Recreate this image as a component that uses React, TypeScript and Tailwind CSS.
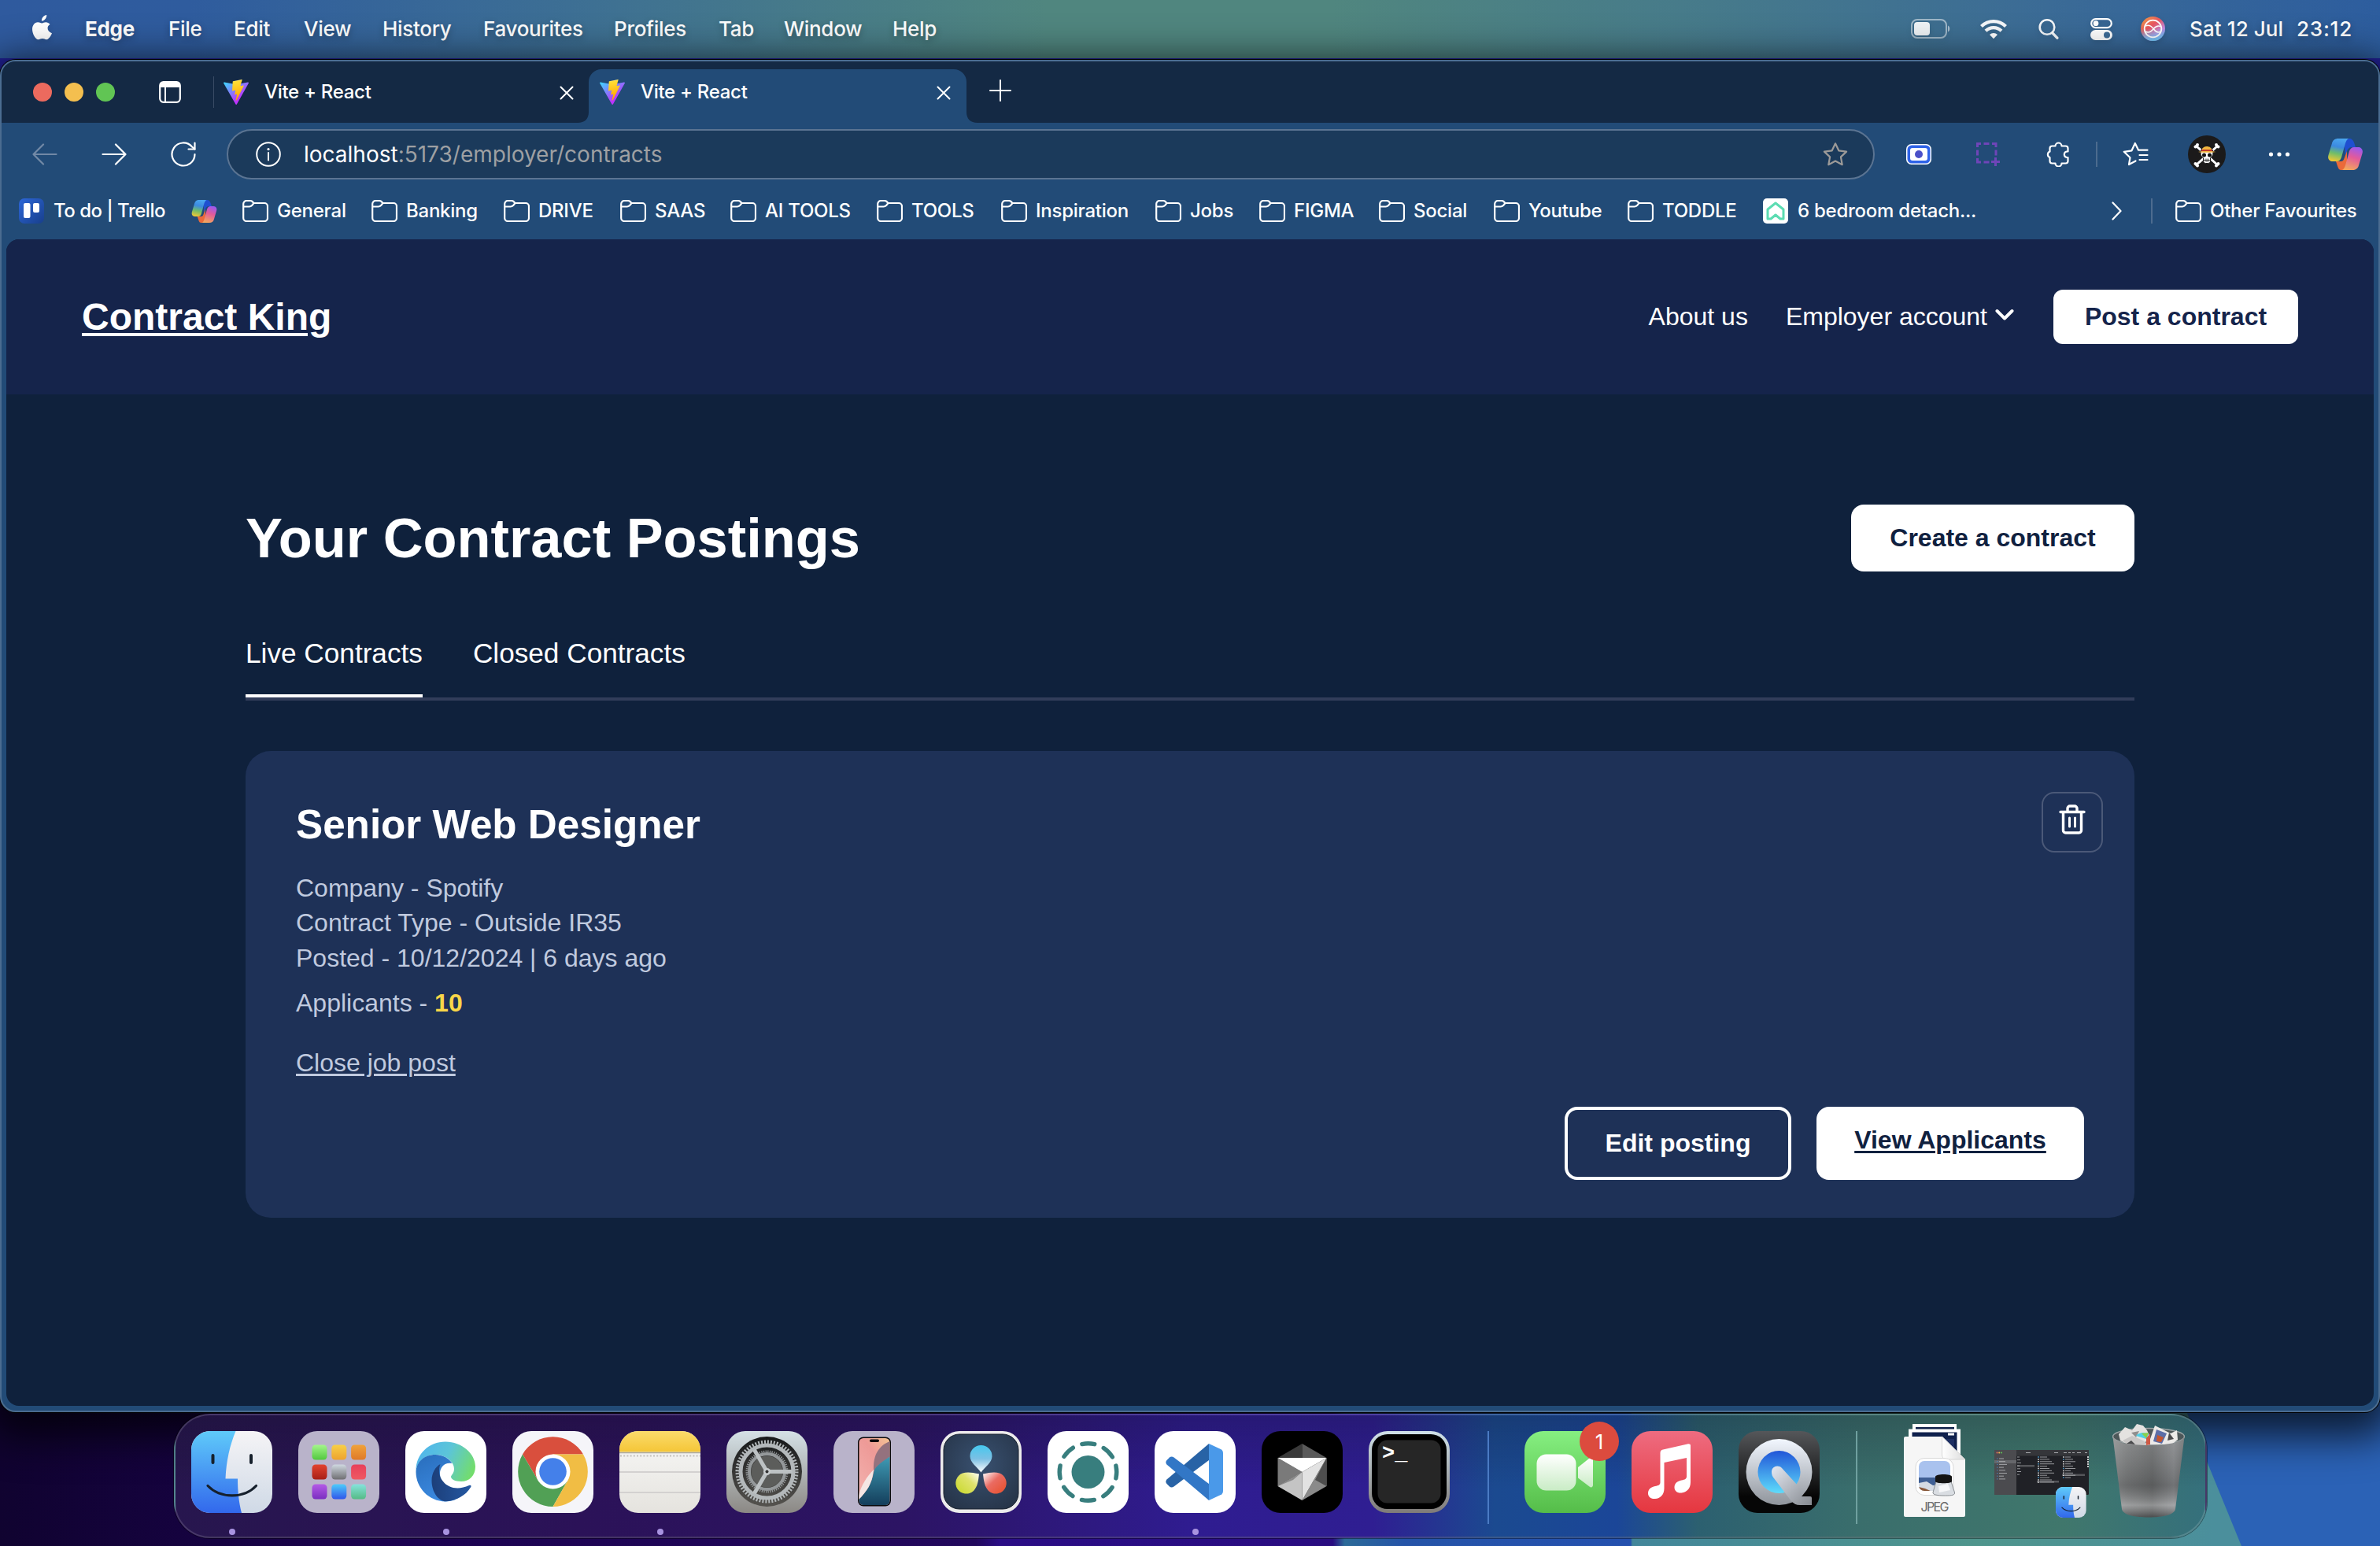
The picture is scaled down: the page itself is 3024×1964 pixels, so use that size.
import React from 'react';

type IconProps = { className?: string };

/* ---------- Browser and system icons ---------- */

const AppleLogo = () => (
  <svg className="h-[32px] w-[26px] drop-shadow-md" viewBox="0 0 26 32" fill="white">
    <path d="M18.2 0c.2 2-.6 3.900-1.800 5.300C15.200 6.700 13.400 7.700 11.900 7.600c-.2-1.900.7-3.900 1.800-5.100C14.900 1.100 16.800.1 18.200 0z" />
    <path d="M25 23.300c-.7 1.600-1 2.300-1.900 3.700-1.300 1.900-3 4.300-5.200 4.300-1.900 0-2.400-1.200-5-1.200s-3.200 1.200-5.100 1.200c-2.200 0-3.800-2.200-5.100-4.100C-.4 22-.9 15.800 1.600 12.500c1.300-2 3.500-3.200 5.500-3.200 2.100 0 3.400 1.200 5.100 1.200 1.700 0 2.700-1.200 5.100-1.200 1.800 0 3.800 1 5.200 2.700-4.600 2.500-3.800 9 2.500 11.300z" />
  </svg>
);

const Battery = () => (
  <svg className="h-[26px] w-[50px] drop-shadow-md" viewBox="0 0 50 26" fill="none">
    <rect x="1" y="1" width="44" height="23" rx="7" stroke="white" strokeOpacity=".5" strokeWidth="2" />
    <rect x="4" y="4" width="20" height="17" rx="4" fill="white" fillOpacity=".92" />
    <path d="M47 8.500c3 1.200 3 6.800 0 8z" fill="white" fillOpacity=".55" />
  </svg>
);

const Wifi = () => (
  <svg className="h-[26px] w-[34px] drop-shadow-md" viewBox="0 0 34 26" fill="none" stroke="white" strokeOpacity=".95" strokeWidth="4.200">
    <path d="M1.500 9.600a22 22 0 0 1 31 0" />
    <path d="M7 15.300a14.200 14.200 0 0 1 20 0" />
    <path d="M17 25.300l-5-5.200a7.200 7.200 0 0 1 10 0z" fill="white" stroke="none" />
  </svg>
);

const SearchIcon = () => (
  <svg className="h-[28px] w-[26px] drop-shadow-md" viewBox="0 0 26 28" fill="none" stroke="white" strokeOpacity=".95" strokeLinecap="round">
    <circle cx="11" cy="11.500" r="9.300" strokeWidth="2.600" />
    <path d="M17.800 18.800l6 6.400" strokeWidth="3.400" />
  </svg>
);

const ControlCentre = () => (
  <svg className="h-[28px] w-[28px] drop-shadow-md" viewBox="0 0 28 28" fill="none">
    <rect x="1.200" y="1.200" width="25.600" height="11" rx="5.500" stroke="white" strokeWidth="2.200" />
    <circle cx="7" cy="6.700" r="3.400" fill="white" />
    <rect x="0" y="15" width="28" height="13" rx="6.500" fill="white" />
    <circle cx="21" cy="21.500" r="4" fill="#3d6c97" />
  </svg>
);

const Siri = () => (
  <svg className="h-[31px] w-[31px] drop-shadow-md" viewBox="0 0 31 31">
    <defs>
      <linearGradient id="siri" x1=".1" y1="0" x2=".9" y2="1">
        <stop offset="0" stopColor="#f0a045" />
        <stop offset=".4" stopColor="#ea5560" />
        <stop offset=".7" stopColor="#c68be0" />
        <stop offset="1" stopColor="#5aa8f0" />
      </linearGradient>
      <linearGradient id="siri2" x1="0" y1="0" x2="0" y2="1">
        <stop offset=".5" stopColor="#70c8f5" stopOpacity="0" />
        <stop offset="1" stopColor="#70c8f5" />
      </linearGradient>
    </defs>
    <circle cx="15.500" cy="15.500" r="15.500" fill="url(#siri)" />
    <circle cx="15.500" cy="15.500" r="15.500" fill="url(#siri2)" />
    <circle cx="15.500" cy="15.500" r="10.800" fill="none" stroke="white" strokeWidth="1.800" />
    <path d="M6 12c5-2.500 8 .5 10.500 4s5 5.500 9 3M5.500 19c4 2 8 0 10.500-3s5-5 9-3.500" fill="none" stroke="white" strokeWidth="1.500" />
  </svg>
);

const SidebarIcon = () => (
  <svg className="h-[28px] w-[28px]" viewBox="0 0 28 28" fill="none">
    <rect x="1.200" y="1.200" width="25.600" height="25.600" rx="4.500" stroke="white" strokeWidth="2.200" />
    <path d="M1 8V5a4 4 0 0 1 4-4h18a4 4 0 0 1 4 4v3z" fill="white" />
    <path d="M8 8v19" stroke="white" strokeWidth="2" />
  </svg>
);

const ViteLogo = () => (
  <svg className="h-[32px] w-[32px]" viewBox="0 0 256 257">
    <defs>
      <linearGradient id="viteA" x1="-.8%" x2="57.600%" y1="7.600%" y2="78.400%">
        <stop offset="0" stopColor="#41D1FF" />
        <stop offset="1" stopColor="#BD34FE" />
      </linearGradient>
      <linearGradient id="viteB" x1="43.400%" x2="50.300%" y1="2.200%" y2="89%">
        <stop offset="0" stopColor="#FFEA83" />
        <stop offset=".083" stopColor="#FFDD35" />
        <stop offset="1" stopColor="#FFA800" />
      </linearGradient>
    </defs>
    <path fill="url(#viteA)" d="M255.153 37.938L134.897 252.976c-2.483 4.440-8.862 4.466-11.382.048L.875 37.958c-2.746-4.814 1.371-10.646 6.827-9.670l120.385 21.517a6.537 6.537 0 0 0 2.322-.004l117.867-21.483c5.438-.991 9.574 4.796 6.877 9.620z" />
    <path fill="url(#viteB)" d="M185.432.063L96.440 17.501a3.268 3.268 0 0 0-2.634 3.014l-5.474 92.456a3.268 3.268 0 0 0 3.997 3.378l24.777-5.718c2.318-.535 4.413 1.507 3.936 3.838l-7.361 36.047c-.495 2.426 1.782 4.500 4.151 3.780l15.304-4.649c2.372-.720 4.652 1.360 4.150 3.788l-11.698 56.621c-.732 3.542 3.979 5.473 5.943 2.437l1.313-2.028l72.516-144.720c1.215-2.423-.880-5.186-3.540-4.672l-25.505 4.922c-2.396.462-4.435-1.770-3.759-4.114l16.646-57.705c.677-2.350-1.370-4.583-3.769-4.113z" />
  </svg>
);

const Cross = () => (
  <svg className="h-[18px] w-[18px]" viewBox="0 0 18 18" stroke="white" strokeWidth="2" strokeLinecap="round">
    <path d="M1.500 1.500l15 15M16.500 1.500l-15 15" />
  </svg>
);

const Plus = () => (
  <svg className="h-[28px] w-[28px]" viewBox="0 0 28 28" stroke="white" strokeWidth="2" strokeLinecap="round">
    <path d="M14 1v26M1 14h26" />
  </svg>
);

const ArrowIcon = ({ className }: IconProps) => (
  <svg className={className} viewBox="0 0 32 28" fill="none" stroke="currentColor" strokeWidth="2.200" strokeLinecap="round" strokeLinejoin="round">
    <path d="M1.500 14h29M18 1.500L30.500 14 18 26.500" />
  </svg>
);

const Reload = () => (
  <svg className="h-[32px] w-[32px]" viewBox="0 0 32 32" fill="none" stroke="white" strokeWidth="2.200" strokeLinecap="round" strokeLinejoin="round">
    <path d="M30.500 16A14.500 14.500 0 1 1 27 6.500L30.500 9.500" />
    <path d="M30.500 1.500v8h-8" />
  </svg>
);

const InfoIcon = () => (
  <svg className="h-[32px] w-[32px]" viewBox="0 0 32 32" fill="none" stroke="white" strokeWidth="2">
    <circle cx="16" cy="16" r="14.800" />
    <path d="M16 14v9.500" strokeLinecap="round" />
    <circle cx="16" cy="9.500" r="1.600" fill="white" stroke="none" />
  </svg>
);

const STAR = 'M16 1.800l4.300 9 9.800 1.300-7.200 6.800 1.800 9.800L16 24l-8.700 4.700 1.800-9.800L1.900 12.100l9.800-1.300z';

const Star = () => (
  <svg className="h-[32px] w-[32px]" viewBox="0 0 32 31" fill="none" stroke="#9c9a98" strokeWidth="2.200" strokeLinejoin="round">
    <path d={STAR} />
  </svg>
);

const RecorderIcon = () => (
  <svg className="h-[26px] w-[32px]" viewBox="0 0 32 26">
    <rect width="32" height="26" rx="6.500" fill="#fff" />
    <rect x="1.500" y="1.500" width="29" height="23" rx="5.500" fill="#2f63e8" />
    <rect x="5" y="5" width="22" height="16" rx="3" fill="#fff" />
    <circle cx="16" cy="13" r="5" fill="#4b50c8" />
  </svg>
);

const CaptureIcon = () => (
  <svg className="h-[30px] w-[30px]" viewBox="0 0 30 30" fill="none" stroke="#6f45b8" strokeWidth="3">
    <path d="M1.500 6V1.500H6M20 1.500h5V6M1.500 20v5H6M9.500 1.500h7M1.500 9.500v7M25 9.500v7M9.500 25h7M24.500 19v11M19 24.500h11" />
  </svg>
);

const Puzzle = () => (
  <svg className="h-[32px] w-[30px]" viewBox="0 0 30 32" fill="none" stroke="white" strokeWidth="2.200" strokeLinejoin="round">
    <path d="M12.500 5.500a4 4 0 0 1 8 0h5a3 3 0 0 1 3 3v4h-1.500a3.800 3.800 0 0 0 0 7.500h1.500v4.500a3 3 0 0 1-3 3h-5a4 4 0 0 1-8 0h-4a3 3 0 0 1-3-3V20a4 4 0 0 1 0-7.500v-4a3 3 0 0 1 3-3z" />
  </svg>
);

const StarList = () => (
  <svg className="h-[32px] w-[33px]" viewBox="0 0 33 32" fill="none" stroke="white" strokeWidth="2.200" strokeLinejoin="round" strokeLinecap="round">
    <path d="M16.500 24.500L8 29l1.500-8.800-7.800-7.400 9.800-1.500L15.800 2l4.300 8.700h11.400M21.500 17h10M21.500 23h10" />
  </svg>
);

const Avatar = () => (
  <svg className="h-[48px] w-[48px]" viewBox="0 0 48 48">
    <circle cx="24" cy="24" r="24" fill="#1b1a1a" />
    <g stroke="#fff" strokeWidth="3" strokeLinecap="round">
      <path d="M10.500 13.500l27 24M37.500 13.500l-27 24" />
    </g>
    <g fill="#fff">
      <circle cx="9.500" cy="14.500" r="2" /><circle cx="12" cy="12" r="2" />
      <circle cx="38.500" cy="14.500" r="2" /><circle cx="36" cy="12" r="2" />
      <circle cx="9.500" cy="36" r="2" /><circle cx="12" cy="38.500" r="2" />
      <circle cx="38.500" cy="36" r="2" /><circle cx="36" cy="38.500" r="2" />
      <path d="M16 22a8 8 0 0 1 16 0c0 4-2 5.500-3.500 6.500V33a3 3 0 0 1-3 2.500h-3A3 3 0 0 1 19.500 33v-4.500C18 27.500 16 26 16 22z" stroke="#1b1a1a" />
    </g>
    <circle cx="20.500" cy="25" r="2.500" fill="#111" /><circle cx="27.500" cy="25" r="2.500" fill="#111" />
    <path d="M20 31.500h8M22 29.500v4M24 29.500v4.500M26 29.500v4" stroke="#222" strokeWidth=".8" />
    <path d="M17.500 20c0-8 13-8 13 0z" fill="#f3b73e" />
    <path d="M17 18h14v2.500H17z" fill="#c0392b" />
    <path d="M13 21c4-1.300 18-1.300 22 0-3 1-19 1-22 0z" fill="#f3b73e" />
  </svg>
);

const Copilot = ({ className }: IconProps) => (
  <svg className={className} viewBox="0 0 44 40">
    <defs>
      <linearGradient id="copA" x1=".5" y1="0" x2=".3" y2="1">
        <stop offset="0" stopColor="#4aa5ee" />
        <stop offset=".35" stopColor="#3c8ae0" />
        <stop offset=".65" stopColor="#6fbd6a" />
        <stop offset="1" stopColor="#f1c833" />
      </linearGradient>
      <linearGradient id="copB" x1=".7" y1="0" x2=".4" y2="1">
        <stop offset="0" stopColor="#9a5af0" />
        <stop offset=".45" stopColor="#e35a9a" />
        <stop offset="1" stopColor="#f2a55e" />
      </linearGradient>
    </defs>
    <path d="M20 0h7c3 0 5 2 6 5l2 6h-5c-3 0-5 2-6 5l-2 6z" fill="#1f4fd0" />
    <path d="M24 40h-7c-3 0-4-2-5-5l-2-6h6c3 0 4-2 5-5l3-8z" fill="#ea6a3a" />
    <path d="M13 0h13c-2 1-3 3-4 6l-5 18c-1 3-3 5-6 5H6c-4 0-7-3-5.500-8L5 6c1-4 4-6 8-6z" fill="url(#copA)" />
    <path d="M31 40H18c2-1 3-3 4-6l5-18c1-3 3-5 6-5h5c4 0 7 3 5.500 8L39 34c-1 4-4 6-8 6z" fill="url(#copB)" />
  </svg>
);

const Folder = () => (
  <svg className="h-[28px] w-[33px] shrink-0" viewBox="0 0 33 28" fill="none" stroke="white" strokeWidth="2.200" strokeLinejoin="round">
    <path d="M1.200 8V5a4 4 0 0 1 4-4h4.500c1.500 0 2.500.6 3.300 1.400L14.500 4H28a4 4 0 0 1 4 4v15a4 4 0 0 1-4 4H5.200a4 4 0 0 1-4-4z" />
    <path d="M1.200 8.500h7.500c1.500 0 2.500-.5 3.300-1.400L14.500 4" />
  </svg>
);

const TrelloIcon = () => (
  <svg className="h-[32px] w-[32px] shrink-0" viewBox="0 0 32 32">
    <defs>
      <linearGradient id="trello" x1="0" y1="0" x2="1" y2="1">
        <stop offset="0" stopColor="#2d67d8" />
        <stop offset="1" stopColor="#183f8c" />
      </linearGradient>
    </defs>
    <rect width="32" height="32" rx="7" fill="url(#trello)" />
    <rect x="6" y="6" width="8.500" height="19" rx="2" fill="#fff" />
    <rect x="18" y="6" width="8" height="12" rx="2" fill="#fff" />
  </svg>
);

const HouseIcon = () => (
  <svg className="h-[32px] w-[32px] shrink-0" viewBox="0 0 32 32">
    <rect width="32" height="32" rx="5" fill="#fff" />
    <path d="M16 6L6 14v12h4l6-5 6 5h4V14z" fill="none" stroke="#5cdcb2" strokeWidth="3" strokeLinejoin="round" />
  </svg>
);

/* ---------- System menu bar ---------- */

const menus = [
  { label: 'Edge', cls: 'w-[106px] font-bold' },
  { label: 'File', cls: 'w-[83px]' },
  { label: 'Edit', cls: 'w-[89px]' },
  { label: 'View', cls: 'w-[100px]' },
  { label: 'History', cls: 'w-[128px]' },
  { label: 'Favourites', cls: 'w-[166px]' },
  { label: 'Profiles', cls: 'w-[133px]' },
  { label: 'Tab', cls: 'w-[83px]' },
  { label: 'Window', cls: 'w-[138px]' },
  { label: 'Help', cls: 'w-[80px]' },
];

function MenuBar() {
  return (
    <header className="relative flex h-[74px] items-center bg-[linear-gradient(90deg,#2f5a9e_0%,#2f5c9e_8%,#3d6f94_24%,#50867f_44%,#50867f_56%,#467a8b_72%,#3b6b96_86%,#2d5d9e_100%)] pl-[41px] text-[26px] font-medium tracking-[-0.3px] text-white [text-shadow:0_3px_8px_rgba(0,0,0,.3)]">
      <span className="-mt-[4px] w-[67px]"><AppleLogo /></span>
      <nav className="flex pb-[1px]">
        {menus.map((m) => (
          <span key={m.label} className={'whitespace-nowrap ' + m.cls}>{m.label}</span>
        ))}
      </nav>
      <div className="ml-auto flex items-center pb-[1px] pr-[33px]">
        <span className="mr-[38px]"><Battery /></span>
        <span className="mr-[40px]"><Wifi /></span>
        <span className="mr-[40px]"><SearchIcon /></span>
        <span className="mr-[36px]"><ControlCentre /></span>
        <span className="mr-[31px]"><Siri /></span>
        <span className="w-[136px] whitespace-nowrap tracking-[0.1px]">Sat 12 Jul</span>
        <span className="w-[73px] whitespace-nowrap tracking-[0.8px]">23:12</span>
      </div>
    </header>
  );
}

/* ---------- Browser chrome ---------- */

function BrowserTab({ active }: { active?: boolean }) {
  return (
    <div className={active ? 'relative flex h-[68px] w-[480px] items-center rounded-t-[16px] bg-[#224b77] pb-[11px] pl-[14px] pr-[20px]' : 'flex h-[68px] w-[476px] items-center pb-[11px] pl-[12px] pr-[19px]'}>
      {active && (
        <>
          <svg className="absolute -left-[14px] bottom-0 h-[14px] w-[14px]" viewBox="0 0 14 14"><path d="M14 0v14H0C9 14 14 9 14 0z" fill="#224b77" /></svg>
          <svg className="absolute -right-[14px] bottom-0 h-[14px] w-[14px]" viewBox="0 0 14 14"><path d="M0 0v14h14C5 14 0 9 0 0z" fill="#224b77" /></svg>
        </>
      )}
      <ViteLogo />
      <span className="ml-[20px] flex-1 whitespace-nowrap text-[24px] font-medium tracking-[-0.3px] text-white">Vite + React</span>
      <span className="mt-[2px]"><Cross /></span>
    </div>
  );
}

function TabBar() {
  return (
    <div className="flex h-[78px] items-end bg-[#142944] pl-[40px]">
      <div className="flex h-[78px] items-center gap-4">
        <span className="size-[24px] rounded-full bg-[#ec6a5e]" />
        <span className="size-[24px] rounded-full bg-[#f4bf4f]" />
        <span className="size-[24px] rounded-full bg-[#61c554]" />
        <span className="ml-[40px]"><SidebarIcon /></span>
        <span className="ml-[25px] h-[40px] w-px bg-[#3a4c66]" />
      </div>
      <BrowserTab />
      <BrowserTab active />
      <span className="ml-[29px] flex h-[74px] items-center self-start"><Plus /></span>
    </div>
  );
}

function Toolbar() {
  return (
    <div className="flex h-[76px] items-start pl-[39px] pt-2">
      <div className="flex h-16 w-full items-center">
        <ArrowIcon className="h-[28px] w-[32px] rotate-180 text-[#7289a6]" />
        <ArrowIcon className="ml-[56px] h-[28px] w-[32px] text-white" />
        <span className="ml-[56px]"><Reload /></span>
        <div className="ml-[39px] flex h-16 w-[2094px] items-center rounded-full border-2 border-[#5b7492] bg-[#1b3a5b] pl-[35px] pr-[32px]">
          <InfoIcon />
          <span className="ml-[29px] flex-1 text-[28px] tracking-[0px] text-[#9ea0a3]"><span className="text-white">localhost</span>:5173/employer/contracts</span>
          <Star />
        </div>
        <span className="ml-[40px]"><RecorderIcon /></span>
        <span className="ml-[57px]"><CaptureIcon /></span>
        <span className="ml-[58px]"><Puzzle /></span>
        <span className="ml-[34px] h-[32px] w-[2px] bg-[#4d6c8f]" />
        <span className="ml-[32px]"><StarList /></span>
        <span className="ml-[50px]"><Avatar /></span>
        <svg className="ml-[54px] h-[8px] w-[28px]" viewBox="0 0 28 8" fill="white"><circle cx="3.500" cy="4" r="2.600" /><circle cx="14" cy="4" r="2.600" /><circle cx="24.500" cy="4" r="2.600" /></svg>
        <Copilot className="ml-[48px] h-[40px] w-[44px]" />
      </div>
    </div>
  );
}

const bookmarks = [
  { label: 'General', cls: 'w-[164px]' },
  { label: 'Banking', cls: 'w-[168px]' },
  { label: 'DRIVE', cls: 'w-[148px]' },
  { label: 'SAAS', cls: 'w-[140px]' },
  { label: 'AI TOOLS', cls: 'w-[186px]' },
  { label: 'TOOLS', cls: 'w-[158px]' },
  { label: 'Inspiration', cls: 'w-[196px]' },
  { label: 'Jobs', cls: 'w-[132px]' },
  { label: 'FIGMA', cls: 'w-[152px]' },
  { label: 'Social', cls: 'w-[146px]' },
  { label: 'Youtube', cls: 'w-[170px]' },
  { label: 'TODDLE', cls: 'w-[172px]' },
];

function Bookmarks() {
  return (
    <div className="flex h-[72px] items-center whitespace-nowrap pl-[22px] text-[24px] font-medium tracking-[-0.25px] text-white">
      <div className="flex w-[219px] items-center gap-[12px] tracking-[-0.5px]"><TrelloIcon />To do | Trello</div>
      <div className="w-[65px]"><Copilot className="h-[29px] w-[33px]" /></div>
      {bookmarks.map((b) => (
        <div key={b.label} className={'flex items-center gap-[11px] ' + b.cls}><Folder />{b.label}</div>
      ))}
      <div className="flex w-[443px] items-center gap-[12px]"><HouseIcon />6 bedroom detach...</div>
      <svg className="h-[24px] w-[13px]" viewBox="0 0 13 24" fill="none" stroke="white" strokeWidth="2.200" strokeLinecap="round" strokeLinejoin="round"><path d="M1.500 1.500L11.500 12 1.500 22.500" /></svg>
      <span className="ml-[37px] mr-[29px] h-[32px] w-[2px] bg-[#4d6c8f]" />
      <div className="flex items-center gap-[11px]"><Folder />Other Favourites</div>
    </div>
  );
}

/* ---------- Contract King page ---------- */

function SiteHeader() {
  return (
    <header className="flex h-[197px] items-center bg-[#15244b] px-24 text-[32px] leading-none text-white">
      <a className="text-[48px] font-bold underline decoration-[4px] underline-offset-[4px]">Contract King</a>
      <nav className="ml-auto flex items-center gap-12">
        <a className="pb-[2px]">About us</a>
        <span className="mr-[2px] flex items-center gap-[10px] pb-[2px]">
          Employer account
          <svg className="-mt-[4px] h-[16px] w-[24px]" viewBox="0 0 24 16" fill="none" stroke="white" strokeWidth="4" strokeLinecap="round" strokeLinejoin="round"><path d="M2.500 3l9.500 9.500L21.500 3" /></svg>
        </span>
        <button className="h-[69px] w-[311px] rounded-[12px] bg-white pb-[2px] font-bold text-[#15244b]">Post a contract</button>
      </nav>
    </header>
  );
}

function JobCard() {
  return (
    <article className="mt-16 flex h-[593px] justify-between rounded-[32px] bg-[#1e3157] px-16 pb-12 pt-[52px]">
      <div className="pt-[12px] text-[32px] leading-[44.800px] text-[#c0cadf]">
        <h2 className="text-[51.200px] font-bold leading-[60px] text-white">Senior Web Designer</h2>
        <div className="mt-[27.500px]">
          <p>Company - Spotify</p>
          <p>Contract Type - Outside IR35</p>
          <p>Posted - 10/12/2024 | 6 days ago</p>
        </div>
        <p className="mt-[11.800px]">Applicants - <b className="text-[#f9d648]">10</b></p>
        <p className="mt-8 underline decoration-[2.500px] underline-offset-[3px]">Close job post</p>
      </div>
      <div className="flex flex-col items-end justify-between">
        <button className="-mr-6 flex h-[77px] w-[78px] justify-center rounded-[16px] border-2 border-[#4b5978] pt-[14px]">
          <svg className="h-[38px] w-[34px]" viewBox="0 0 34 38" fill="none" stroke="white" strokeLinecap="round" strokeLinejoin="round">
            <path d="M2 9.500h30M5.500 9.500V33a3 3 0 0 0 3 3h17a3 3 0 0 0 3-3V9.500M11 9V5a3 3 0 0 1 3-3h6a3 3 0 0 1 3 3v4" strokeWidth="3.400" />
            <path d="M13.500 17v11M20.500 17v11" strokeWidth="3" />
          </svg>
        </button>
        <div className="flex gap-8 text-[32px] font-bold leading-none">
          <button className="h-[93px] w-[288px] rounded-[16px] border-4 border-white pb-[2px] text-white">Edit posting</button>
          <a className="flex h-[93px] w-[340px] items-center justify-center rounded-[16px] bg-white pb-[10px] text-[#10213f] underline decoration-[3px] underline-offset-[3px]">View Applicants</a>
        </div>
      </div>
    </article>
  );
}

function ContractsPage() {
  return (
    <div className="h-[1482px] overflow-hidden rounded-[16px] bg-[#0f213c] font-['Liberation_Sans',Arial,sans-serif]">
      <SiteHeader />
      <main className="mx-auto w-[2400px] pt-[140px]">
        <div className="flex items-center justify-between">
          <h1 className="text-[70.400px] font-bold leading-[85px] text-white">Your Contract Postings</h1>
          <button className="h-[85px] w-[360px] rounded-[16px] bg-white pb-[2px] text-[32px] font-bold leading-none text-[#10213f]">Create a contract</button>
        </div>
        <div className="mt-[83px] flex gap-16 border-b-4 border-[#323d5a] text-[35.200px] leading-[42px] text-white">
          <span className="h-[77px] border-b-4 border-white">Live Contracts</span>
          <span>Closed Contracts</span>
        </div>
        <JobCard />
      </main>
    </div>
  );
}

/* ---------- Dock icons ---------- */

const Finder = ({ className }: IconProps) => (
  <svg className={className} viewBox="0 0 104 104">
    <defs>
      <linearGradient id="fnA" x1="0" y1="0" x2="0" y2="1"><stop offset="0" stopColor="#5fcafa" /><stop offset="1" stopColor="#3268ec" /></linearGradient>
      <linearGradient id="fnB" x1="0" y1="0" x2="0" y2="1"><stop offset="0" stopColor="#f5f4f6" /><stop offset="1" stopColor="#cfd9e6" /></linearGradient>
    </defs>
    <rect width="103" height="104" rx="24" fill="url(#fnB)" />
    <path d="M24 0h32.500C49 18 44.500 38 43.500 60.500H59c0 16 1.500 30 5 43.500H24A24 24 0 0 1 0 80V24A24 24 0 0 1 24 0z" fill="url(#fnA)" />
    <path d="M27.500 31v9M76 31v9" stroke="#16202c" strokeWidth="4" strokeLinecap="round" />
    <path d="M21 69.500c16 16.500 46 16.500 61.500 0" fill="none" stroke="#16202c" strokeWidth="3.200" strokeLinecap="round" />
  </svg>
);

const pads = [
  ['#a4f58c', '#52c83e'], ['#f7cf47', '#eda32f'], ['#f0a23a', '#df7a28'],
  ['#e2432f', '#a81f16'], ['#cfd8e0', '#6f6f72'], ['#e8405a', '#ee5a63'],
  ['#b45ae6', '#7a2fc0'], ['#4ecbfa', '#2f55ea'], ['#86e3dc', '#55bb85'],
];

const Launchpad = () => (
  <svg className="size-[104px]" viewBox="0 0 104 104">
    <rect width="103" height="104" rx="24" fill="#b9b3ca" />
    {pads.map(([a, b], i) => (
      <g key={i}>
        <defs><linearGradient id={'pad' + i} x1="0" y1="0" x2="0" y2="1"><stop offset="0" stopColor={a} /><stop offset="1" stopColor={b} /></linearGradient></defs>
        <rect x={17.5 + (i % 3) * 24.800} y={17.5 + Math.floor(i / 3) * 25} width="19" height="19" rx="4.500" fill={'url(#pad' + i + ')'} />
      </g>
    ))}
  </svg>
);

const Edge = () => (
  <svg className="size-[104px]" viewBox="0 0 104 104">
    <defs>
      <linearGradient id="edA" x1="0" y1=".3" x2="1" y2=".6"><stop offset="0" stopColor="#4fb5ec" /><stop offset=".5" stopColor="#5cc5d8" /><stop offset="1" stopColor="#73dd6c" /></linearGradient>
      <linearGradient id="edB" x1=".2" y1="0" x2=".6" y2="1"><stop offset="0" stopColor="#2a6fbe" /><stop offset="1" stopColor="#3c8be2" /></linearGradient>
      <linearGradient id="edC" x1="0" y1="0" x2="1" y2="0"><stop offset="0" stopColor="#1c3f7a" /><stop offset="1" stopColor="#2558a2" /></linearGradient>
    </defs>
    <rect width="103" height="104" rx="24" fill="#fff" />
    <path d="M13.500 50C13.500 29 30 13.500 51 13.500S89 29 89 45c0 12-8 19-18 19-8 0-13-3-13-6 0-2 4-4 4-10C62 38 50 30 38 30 24 30 15 40 13.500 50z" fill="url(#edA)" />
    <path d="M13.500 52C14 39 24 30 38 30c10 0 18 5 21.500 11C50 39 44 46 44 54c0 14 8 28 20 33-4 1.600-8.500 2.400-13 2.400C30 89.400 13.500 72 13.500 52z" fill="url(#edB)" />
    <path d="M33.500 63c0-10 5-18 11-21-3 8-1.500 16 3.500 22 7 9 20 11 33 5 2-1 3.500.5 2 2.500-6 10-18 17-31 17.800-10 .2-18.500-12-18.500-26.300z" fill="url(#edC)" />
  </svg>
);

const Chrome = () => (
  <svg className="size-[104px]" viewBox="0 0 104 104">
    <rect width="103" height="104" rx="24" fill="#f5f5f9" />
    <g transform="translate(51.500 51.500)">
      <path d="M38.500-22A44.500 44.500 0 0 0-38.500-22L-19 11 0-22z" fill="#d94f3d" />
      <path d="M-38.500-22A44.500 44.500 0 0 0 0 44.500L19 11-19 11z" fill="#51a055" />
      <path d="M0 44.500A44.500 44.500 0 0 0 38.500-22H0L19 11z" fill="#f1bd44" />
      <circle r="22" fill="#fff" />
      <circle r="17.300" fill="#4480ea" />
    </g>
  </svg>
);

const Notes = () => (
  <svg className="size-[104px]" viewBox="0 0 104 104">
    <defs>
      <linearGradient id="ntA" x1="0" y1="0" x2="0" y2="1"><stop offset="0" stopColor="#fadb6c" /><stop offset="1" stopColor="#f5c637" /></linearGradient>
      <linearGradient id="ntB" x1="0" y1="0" x2="0" y2="1"><stop offset="0" stopColor="#f8f8f7" /><stop offset="1" stopColor="#e5e3de" /></linearGradient>
    </defs>
    <rect width="103" height="104" rx="24" fill="url(#ntB)" />
    <path d="M0 26.500V24A24 24 0 0 1 24 0h55a24 24 0 0 1 24 24v2.500z" fill="url(#ntA)" />
    <path d="M0 27.500h103" stroke="#aaa69a" strokeWidth="1.500" />
    <path d="M1 31.500h102" stroke="#c3c1bd" strokeWidth="2" strokeDasharray="2 2.200" />
    <path d="M0 52h103M0 78h103" stroke="#d3d1d0" strokeWidth="2" />
  </svg>
);

const Settings = () => (
  <svg className="size-[104px]" viewBox="0 0 104 104">
    <defs>
      <linearGradient id="stA" x1="0" y1="0" x2="0" y2="1"><stop offset="0" stopColor="#d5e1e6" /><stop offset="1" stopColor="#8b8884" /></linearGradient>
      <linearGradient id="stB" x1="0" y1="0" x2="0" y2="1"><stop offset="0" stopColor="#17191a" /><stop offset="1" stopColor="#55534f" /></linearGradient>
    </defs>
    <rect width="103" height="104" rx="24" fill="url(#stA)" />
    <circle cx="51.500" cy="51.500" r="44.500" fill="url(#stB)" />
    <g fill="none" stroke="#b3b8ba">
      <circle cx="51.500" cy="51.500" r="37.500" strokeWidth="5" strokeDasharray="2 1.930" />
      <circle cx="51.500" cy="51.500" r="33.500" strokeWidth="5" />
      <circle cx="51.500" cy="51.500" r="25.500" strokeWidth="3" strokeDasharray="1.300 1.370" stroke="#94989a" />
      <circle cx="51.500" cy="51.500" r="22.500" strokeWidth="4" stroke="#94989a" />
    </g>
    <circle cx="51.500" cy="51.500" r="20" fill="#5c5d5b" />
    <path d="M51.500 51.500h32M51.500 51.500l-16 27.500M51.500 51.500L35.500 24" stroke="#bcc1c3" strokeWidth="5" />
    <circle cx="51.500" cy="51.500" r="4.500" fill="#c8ccce" />
    <circle cx="51.500" cy="51.500" r="2" fill="#333" />
  </svg>
);

const Phone = () => (
  <svg className="size-[104px]" viewBox="0 0 104 104">
    <defs>
      <linearGradient id="phA" x1=".8" y1="0" x2=".2" y2="1"><stop offset="0" stopColor="#f3bd93" /><stop offset=".3" stopColor="#ee9a97" /><stop offset="1" stopColor="#f3b3b0" /></linearGradient>
      <linearGradient id="phB" x1="0" y1="0" x2="0" y2="1"><stop offset="0" stopColor="#3f9bb5" /><stop offset="1" stopColor="#123a57" /></linearGradient>
      <clipPath id="phC"><rect x="32.500" y="9" width="39" height="85" rx="5.500" /></clipPath>
    </defs>
    <rect width="103" height="104" rx="24" fill="#b9b3ca" />
    <rect x="31" y="7.500" width="42" height="88" rx="7" fill="#0a0a0c" />
    <g clipPath="url(#phC)">
      <rect x="32" y="8" width="41" height="88" fill="url(#phA)" />
      <path d="M72 13C58 18 50 30 51 50l21-18z" fill="#94727e" />
      <path d="M72 32C64 38 53 44 51 52c-2 14-8 24-19 35v10h41z" fill="url(#phB)" />
      <path d="M51 49c-8 8-16 20-19 33v5c11-11 17-21 18.500-35z" fill="#f4e6e4" />
    </g>
    <rect x="46" y="10.500" width="12" height="3.500" rx="1.700" fill="#0a0a0c" />
  </svg>
);

const Resolve = () => (
  <svg className="size-[104px]" viewBox="0 0 104 104">
    <defs>
      <radialGradient id="rsBg" cx=".5" cy=".4" r=".7"><stop offset="0" stopColor="#395170" /><stop offset="1" stopColor="#263448" /></radialGradient>
      <linearGradient id="rsA" x1=".5" y1="0" x2=".5" y2="1"><stop offset="0" stopColor="#45c8ee" /><stop offset=".5" stopColor="#7cc0e4" /><stop offset="1" stopColor="#fff" /></linearGradient>
      <linearGradient id="rsB" x1="1" y1="0" x2=".2" y2=".8"><stop offset="0" stopColor="#fff" /><stop offset=".5" stopColor="#dfe36c" /><stop offset="1" stopColor="#cfdc3e" /></linearGradient>
      <linearGradient id="rsC" x1="0" y1="0" x2=".8" y2=".8"><stop offset="0" stopColor="#fff" /><stop offset=".55" stopColor="#ea6b62" /><stop offset="1" stopColor="#e8583c" /></linearGradient>
    </defs>
    <rect width="103" height="104" rx="24" fill="#ecebec" />
    <rect x="4" y="4" width="95" height="95" rx="20" fill="url(#rsBg)" stroke="#18212e" />
    <path d="M51.500 52.500C46 45 37.500 40 37.500 32a14 14 0 0 1 28 0c0 8-8.500 13-14 20.500z" fill="url(#rsA)" />
    <path d="M49 54.500c-1 9-2 16-7 21.500A13.500 13.500 0 1 1 28 53.500c6-2 12-1 21 1z" fill="url(#rsB)" />
    <path d="M54 54.500c1 9 2 16 7 21.500a13.500 13.500 0 1 0 14-22.500c-6-2-12-1-21 1z" fill="url(#rsC)" />
  </svg>
);

const RingApp = () => (
  <svg className="size-[104px]" viewBox="0 0 104 104">
    <rect width="103" height="104" rx="24" fill="#fff" />
    <circle cx="51.500" cy="52" r="21" fill="#387e7e" />
    <circle cx="51.500" cy="52" r="36.300" fill="none" stroke="#387e7e" strokeWidth="5.400" strokeLinecap="round" strokeDasharray="16 12.510" transform="rotate(-12.600 51.500 52)" />
  </svg>
);

const VSCode = () => (
  <svg className="size-[104px]" viewBox="0 0 104 104">
    <rect width="103" height="104" rx="24" fill="#fff" />
    <path d="M69 16v21L24.500 70.500c-2 1.500-4 1.300-5.500 0l-3.500-3.500c-1.500-1.500-1.500-4 0-5.500z" fill="#2863a6" />
    <path d="M69 88V67L24.500 33.500c-2-1.500-4-1.300-5.500 0L15.500 37c-1.500 1.500-1.500 4 0 5.500z" fill="#3277c6" />
    <path d="M69 16l15 7c2 1 3 2.500 3 5v48c0 2.500-1 4-3 5l-15 7z" fill="#4a99e9" />
  </svg>
);

const Cursor = () => (
  <svg className="size-[104px]" viewBox="0 0 104 104">
    <rect width="103" height="104" rx="24" fill="#000" />
    <path d="M51.500 16L20.500 34h31z" fill="#3a3a3a" /><path d="M51.500 16L82.500 34h-31z" fill="#5a5a5a" />
    <path d="M20.500 34L51.500 52l-31 18z" fill="#7a7a7a" /><path d="M20.500 70L51.500 52v36z" fill="#c4c4c4" />
    <path d="M20.500 70l31-18L40 62z" fill="#8b8b8b" />
    <path d="M82.500 34v36l-31 18z" fill="#8a8a8a" /><path d="M82.500 34v36L68 62z" fill="#4d4d4d" />
    <path d="M82.500 34L51.500 88V52z" fill="#e2e2e2" /><path d="M20.500 34h62l-31 18z" fill="#fff" />
  </svg>
);

const Terminal = () => (
  <svg className="size-[104px]" viewBox="0 0 104 104">
    <defs><linearGradient id="tmA" x1="0" y1="0" x2="0" y2="1"><stop offset="0" stopColor="#cfe0e8" /><stop offset="1" stopColor="#7f7b78" /></linearGradient></defs>
    <rect width="103" height="104" rx="24" fill="url(#tmA)" />
    <rect x="4" y="4" width="95" height="95" rx="20" fill="#000" />
    <rect x="11.500" y="11.500" width="80" height="80" rx="12" fill="#262626" />
    <text x="17" y="36" fill="#fff" fontFamily="Liberation Mono, monospace" fontWeight="700" fontSize="27">&gt;_</text>
  </svg>
);

const FaceTime = () => (
  <svg className="size-[104px]" viewBox="0 0 104 104">
    <defs>
      <linearGradient id="ftA" x1="0" y1="0" x2="0" y2="1"><stop offset="0" stopColor="#86ef81" /><stop offset="1" stopColor="#55bd49" /></linearGradient>
      <linearGradient id="ftB" x1="0" y1="0" x2="0" y2="1"><stop offset="0" stopColor="#fff" /><stop offset="1" stopColor="#c9ecc5" /></linearGradient>
    </defs>
    <rect width="103" height="104" rx="24" fill="url(#ftA)" />
    <rect x="15.500" y="29.500" width="50" height="46" rx="12" fill="url(#ftB)" />
    <path d="M68 46l14.500-11.500c2.500-2 4.500-.5 4.500 2v32c0 2.500-2 4-4.500 2L68 59.500z" fill="url(#ftB)" />
  </svg>
);

const Music = () => (
  <svg className="size-[104px]" viewBox="0 0 104 104">
    <defs><linearGradient id="muA" x1="0" y1="0" x2="0" y2="1"><stop offset="0" stopColor="#ee6c80" /><stop offset="1" stopColor="#e5373f" /></linearGradient></defs>
    <rect width="103" height="104" rx="24" fill="url(#muA)" />
    <path d="M75 18.500V65c0 8-5 13-11.500 13.500C58 79 54.500 76 54.500 71.500c0-5 3.500-8 9-9 4.500-1 6.500-1.500 6.500-5V34L41.500 40v33c0 8-5 12.500-11.500 13-5.500.5-9-2.500-9-7 0-5 3.500-8 9-9 4.500-1 6.500-1.500 6.500-5V28c0-2.500 1-4 3.500-4.500l31-7c2.500-.5 4 0 4 2z" fill="#fff" />
  </svg>
);

const QuickTime = () => (
  <svg className="size-[104px]" viewBox="0 0 104 104">
    <defs>
      <linearGradient id="qtA" x1="0" y1="0" x2="0" y2="1"><stop offset="0" stopColor="#55575a" /><stop offset=".8" stopColor="#060606" /></linearGradient>
      <linearGradient id="qtB" x1="0" y1="0" x2="0" y2="1"><stop offset="0" stopColor="#f2f7ff" /><stop offset="1" stopColor="#8f949b" /></linearGradient>
      <linearGradient id="qtC" x1="0" y1="0" x2="0" y2="1"><stop offset="0" stopColor="#2156d8" /><stop offset="1" stopColor="#5fdcfb" /></linearGradient>
      <linearGradient id="qtD" x1="0" y1="0" x2="1" y2="1"><stop offset="0" stopColor="#e4e9f3" /><stop offset="1" stopColor="#85898f" /></linearGradient>
    </defs>
    <rect width="103" height="104" rx="24" fill="url(#qtA)" />
    <circle cx="51.500" cy="52" r="42" fill="url(#qtB)" />
    <circle cx="51.500" cy="52" r="27" fill="url(#qtC)" />
    <path d="M42 52c0-7 8-10 13-5l20 22 4 14h12a2 2 0 0 1 2 2v9H78c-5 0-8-2-11-5L45 60c-2-2-3-5-3-8z" fill="url(#qtD)" />
  </svg>
);

const JpegStack = () => (
  <svg className="h-[122px] w-[79px]" viewBox="0 0 79 122">
    <defs>
      <linearGradient id="jpA" x1="0" y1="0" x2="1" y2="0"><stop offset="0" stopColor="#fff" /><stop offset="1" stopColor="#dcdcdc" /></linearGradient>
      <clipPath id="jpC"><rect x="19" y="48" width="40" height="38" rx="7" /></clipPath>
    </defs>
    <path d="M11 1h56v40H11z" fill="#fff" /><path d="M15 5h49v30H15z" fill="#0f2049" />
    <path d="M6 7.500h66v40H6z" fill="#fff" /><path d="M10.500 11.500h57v40h-57z" fill="#10214d" /><path d="M56 12.500h8v3h-8z" fill="#fff" /><path d="M50 20h14v20H50z" fill="#1d2f63" />
    <path d="M2 17h47l29 29v71a2 2 0 0 1-2 2H2a2 2 0 0 1-2-2V19a2 2 0 0 1 2-2z" fill="#f6f6f6" />
    <path d="M48.500 17l29.500 29H55c-4 0-6.500-2.500-6.500-6z" fill="url(#jpA)" stroke="#c8c8c8" strokeWidth=".7" />
    <rect x="15" y="44.500" width="48" height="47" rx="11" fill="#fff" stroke="#d8d8d8" />
    <g clipPath="url(#jpC)">
      <path d="M19 47h40v22H19z" fill="#a9c2ee" /><path d="M19 69h40v10H19z" fill="#3f5f94" />
      <path d="M19 76l10-2 8 5 12-1v10H19z" fill="#d5dbe4" /><path d="M19 81l8 2 9 4H19z" fill="#8a5a3c" />
    </g>
    <path d="M41 74h19l4.500 14c.5 3-2 4-12 4s-16-1-15.500-4z" fill="#d9dde2" stroke="#8a8f94" /><path d="M44 80l12-3 3 8-14 3z" fill="#f6f7f9" />
    <path d="M40 68c0-4 21-4 21 0v6c0 3-21 3-21 0z" fill="#141414" />
    <text x="21.500" y="111.500" fontFamily="Inter, sans-serif" fontSize="16" fill="#6a6a6a" textLength="36">JPEG</text>
  </svg>
);

const thumbRows = [0, 1, 2, 3, 4, 5, 6, 7, 8, 9, 10, 11];

const MinimisedWindow = () => (
  <svg className="h-[57px] w-[120px]" viewBox="0 0 120 57">
    <rect width="120" height="57" rx="1.500" fill="#202126" />
    <path d="M28 0h92v7.500H28z" fill="#35363a" />
    <path d="M0 0h28v57H0z" fill="#4b4b4f" />
    <path d="M0 13h28v4H0z" fill="#66676b" />
    <circle cx="3.500" cy="3.500" r="1" fill="#ec6a5e" /><circle cx="6.200" cy="3.500" r="1" fill="#f4bf4f" /><circle cx="9" cy="3.500" r="1" fill="#61c554" />
    <path d="M40 3.500h6M76 3.500h5M88 3.500h4M94 3.500h3M99 3.500h3M105 3.500h5M115 3.500h3" stroke="#a8a9ad" strokeWidth="1.200" />
    <path d="M29 19h22v2.500H29zM54 39h28v2.500H54zM86 30.500h29V33H86z" fill="#55565a" />
    {thumbRows.map((i) => (
      <g key={i} opacity=".7">
        {i < 8 && <path d={'M6 ' + (11 + i * 3.700) + 'h' + (6 + (i % 3) * 2)} stroke="#c9cacd" />}
        {i < 8 && <path d={'M3 ' + (11 + i * 3.700) + 'h1.500'} stroke="#3f9be8" />}
        {i < 7 && <path d={'M29 ' + (9 + i * 3.700) + 'h' + (3 + (i % 3))} stroke="#c9cacd" />}
        <path d={'M58 ' + (9 + i * 2.900) + 'h' + (9 + (i % 4) * 3)} stroke="#c9cacd" />
        <path d={'M55 ' + (9 + i * 2.900) + 'h2'} stroke={i % 3 ? '#fff' : '#4fb0ea'} strokeWidth="1.500" />
        {i < 10 && <path d={'M90 ' + (9 + i * 2.900) + 'h' + (7 + (i % 3) * 3)} stroke="#c9cacd" />}
        {i < 10 && <path d={'M87 ' + (9 + i * 2.900) + 'h2'} stroke={i % 4 === 1 ? '#4fb0ea' : '#fff'} strokeWidth="1.500" />}
      </g>
    ))}
    <path d="M119 8v15" stroke="#fff" strokeDasharray="2 1" strokeWidth="1.500" />
  </svg>
);

const Trash = () => (
  <svg className="h-[120px] w-[92px]" viewBox="0 0 92 120">
    <defs>
      <linearGradient id="trA" x1="0" y1="0" x2="1" y2="0"><stop offset="0" stopColor="#8d8f90" /><stop offset=".2" stopColor="#7b7d7e" /><stop offset=".55" stopColor="#6a6c6d" /><stop offset=".85" stopColor="#85878a" /><stop offset="1" stopColor="#6d7071" /></linearGradient>
      <linearGradient id="trB" x1="0" y1="0" x2="0" y2="1"><stop offset="0" stopColor="#fff" stopOpacity=".12" /><stop offset=".6" stopColor="#000" stopOpacity=".15" /><stop offset=".85" stopColor="#fff" stopOpacity=".25" /><stop offset="1" stopColor="#000" stopOpacity=".3" /></linearGradient>
    </defs>
    <ellipse cx="46" cy="17" rx="45.500" ry="10.500" fill="#4d5759" stroke="#9ba3a5" strokeWidth="1.500" />
    <path d="M8 14l8-9 9 4 6-8 8 2 5 6 4 9-8 8-18 2-12-6z" fill="#e4e2e0" />
    <path d="M13 22l12-6 14 6 8 6H20z" fill="#c9c7c6" /><path d="M24 12l10-2-4 8z" fill="#8f8e8d" />
    <path d="M48 20l6-17 8 4 12 6 8-4 1 12-8 6H48z" fill="#eceae8" />
    <path d="M56 8l13 5-6 13-11-3z" fill="#5c6ea8" /><path d="M57 15l8 3-3 6-6-1z" fill="#c5562f" />
    <path d="M30 16c4-5 12-5 16-2l-3 6z" fill="#4fd0e6" /><path d="M37 13l9-1-3 7z" fill="#8ad14a" /><path d="M43 19l5-6v14l-5 1z" fill="#cf5a45" />
    <path d="M18 26l6-4 5 5zM72 12l6 8-8 2z" fill="#4a4a4c" />
    <path d="M.5 17c2 7 20 11 45.500 11s43.500-4 45.500-11L80 109c-1 7-15 10.500-34 10.500S13 116 12 109z" fill="url(#trA)" />
    <path d="M.5 17c2 7 20 11 45.500 11s43.500-4 45.500-11L80 109c-1 7-15 10.500-34 10.500S13 116 12 109z" fill="url(#trB)" />
  </svg>
);

const dockApps = [
  { key: 'finder', icon: <Finder className="size-[104px]" />, open: true },
  { key: 'launchpad', icon: <Launchpad /> },
  { key: 'edge', icon: <Edge />, open: true },
  { key: 'chrome', icon: <Chrome /> },
  { key: 'notes', icon: <Notes />, open: true },
  { key: 'settings', icon: <Settings /> },
  { key: 'phone', icon: <Phone /> },
  { key: 'resolve', icon: <Resolve /> },
  { key: 'ring', icon: <RingApp /> },
  { key: 'vscode', icon: <VSCode />, open: true },
  { key: 'cursor', icon: <Cursor /> },
  { key: 'terminal', icon: <Terminal /> },
];

function Dock() {
  return (
    <div className="relative ml-[221px] mt-[2px] flex h-[158px] w-[2583px] rounded-[46px] border-2 border-white/15 bg-[linear-gradient(180deg,rgba(10,10,20,.22),rgba(10,10,20,0)_60%),linear-gradient(90deg,#27164e_0%,#2b1258_20%,#2c1464_36%,#2f1c90_50%,#2f1e92_59%,#1b4a90_65%,#1b4698_71%,#2c6070_75%,#3a6e6c_83%,#40776c_93%,#35707c_100%)] pl-[20px] pt-[20px] shadow-[0_0_0_1px_rgba(0,0,0,.4)]">
      <div className="flex gap-8">
        {dockApps.map((a) => (
          <div key={a.key} className="flex w-[104px] flex-col items-center">
            {a.icon}
            {a.open && <span className="mt-[20px] size-[8px] rounded-full bg-[#a893e0]" />}
          </div>
        ))}
      </div>
      <span className="ml-[47px] h-[118px] w-[2px] bg-[#4b7bc4]" />
      <div className="ml-[45px] flex gap-8">
        <div className="relative h-[104px]">
          <FaceTime />
          <span className="absolute -right-[16px] -top-[12px] flex size-[50px] items-center justify-center rounded-full bg-[#dc4b3e] text-[26px] text-white">1</span>
        </div>
        <Music />
        <QuickTime />
      </div>
      <span className="ml-[45px] h-[118px] w-[2px] bg-[#6fa09f]" />
      <div className="-mt-[10px] ml-[59px] flex">
        <JpegStack />
        <div className="relative ml-[36px] mt-[34px] h-[57px]">
          <MinimisedWindow />
          <Finder className="absolute -bottom-[29px] right-[3px] size-[39px]" />
        </div>
        <span className="ml-[30px]"><Trash /></span>
      </div>
    </div>
  );
}

const Wallpaper = () => (
  <svg className="absolute left-0 top-0 h-[1964px] w-[3024px]" viewBox="0 0 3024 1964">
    <defs>
      <linearGradient id="wpA" x1="0" y1="0" x2="1" y2="0">
        <stop offset="0" stopColor="#100330" /><stop offset=".17" stopColor="#1b0250" /><stop offset=".41" stopColor="#22085c" />
        <stop offset=".42" stopColor="#2a0d85" /><stop offset=".56" stopColor="#290c80" /><stop offset=".565" stopColor="#2c6a98" />
        <stop offset=".59" stopColor="#2554a8" /><stop offset=".685" stopColor="#2450ae" /><stop offset=".686" stopColor="#42869a" /><stop offset=".83" stopColor="#4f958c" />
        <stop offset=".93" stopColor="#4b8f9c" /><stop offset="1" stopColor="#4b8f9c" />
      </linearGradient>
    </defs>
    <rect width="3024" height="1964" fill="#22229a" />
    <rect y="1700" width="3024" height="264" fill="url(#wpA)" />
    <path d="M2740 1700h284v264h-176z" fill="#2b62b6" />
  </svg>
);

export default function App() {
  return (
    <div className="relative h-[1964px] w-[3024px] overflow-hidden font-['Inter',sans-serif]">
      <Wallpaper />
      <MenuBar />
      <section className="relative mt-[2px] h-[1718px] overflow-hidden rounded-[20px] border-2 border-[#4b6c90] bg-[#224b77] shadow-[0_0_0_1px_#000,0_16px_50px_16px_rgba(0,0,0,.7)]">
        <TabBar />
        <Toolbar />
        <Bookmarks />
        <div className="px-[6px]">
          <ContractsPage />
        </div>
      </section>
      <Dock />
    </div>
  );
}
